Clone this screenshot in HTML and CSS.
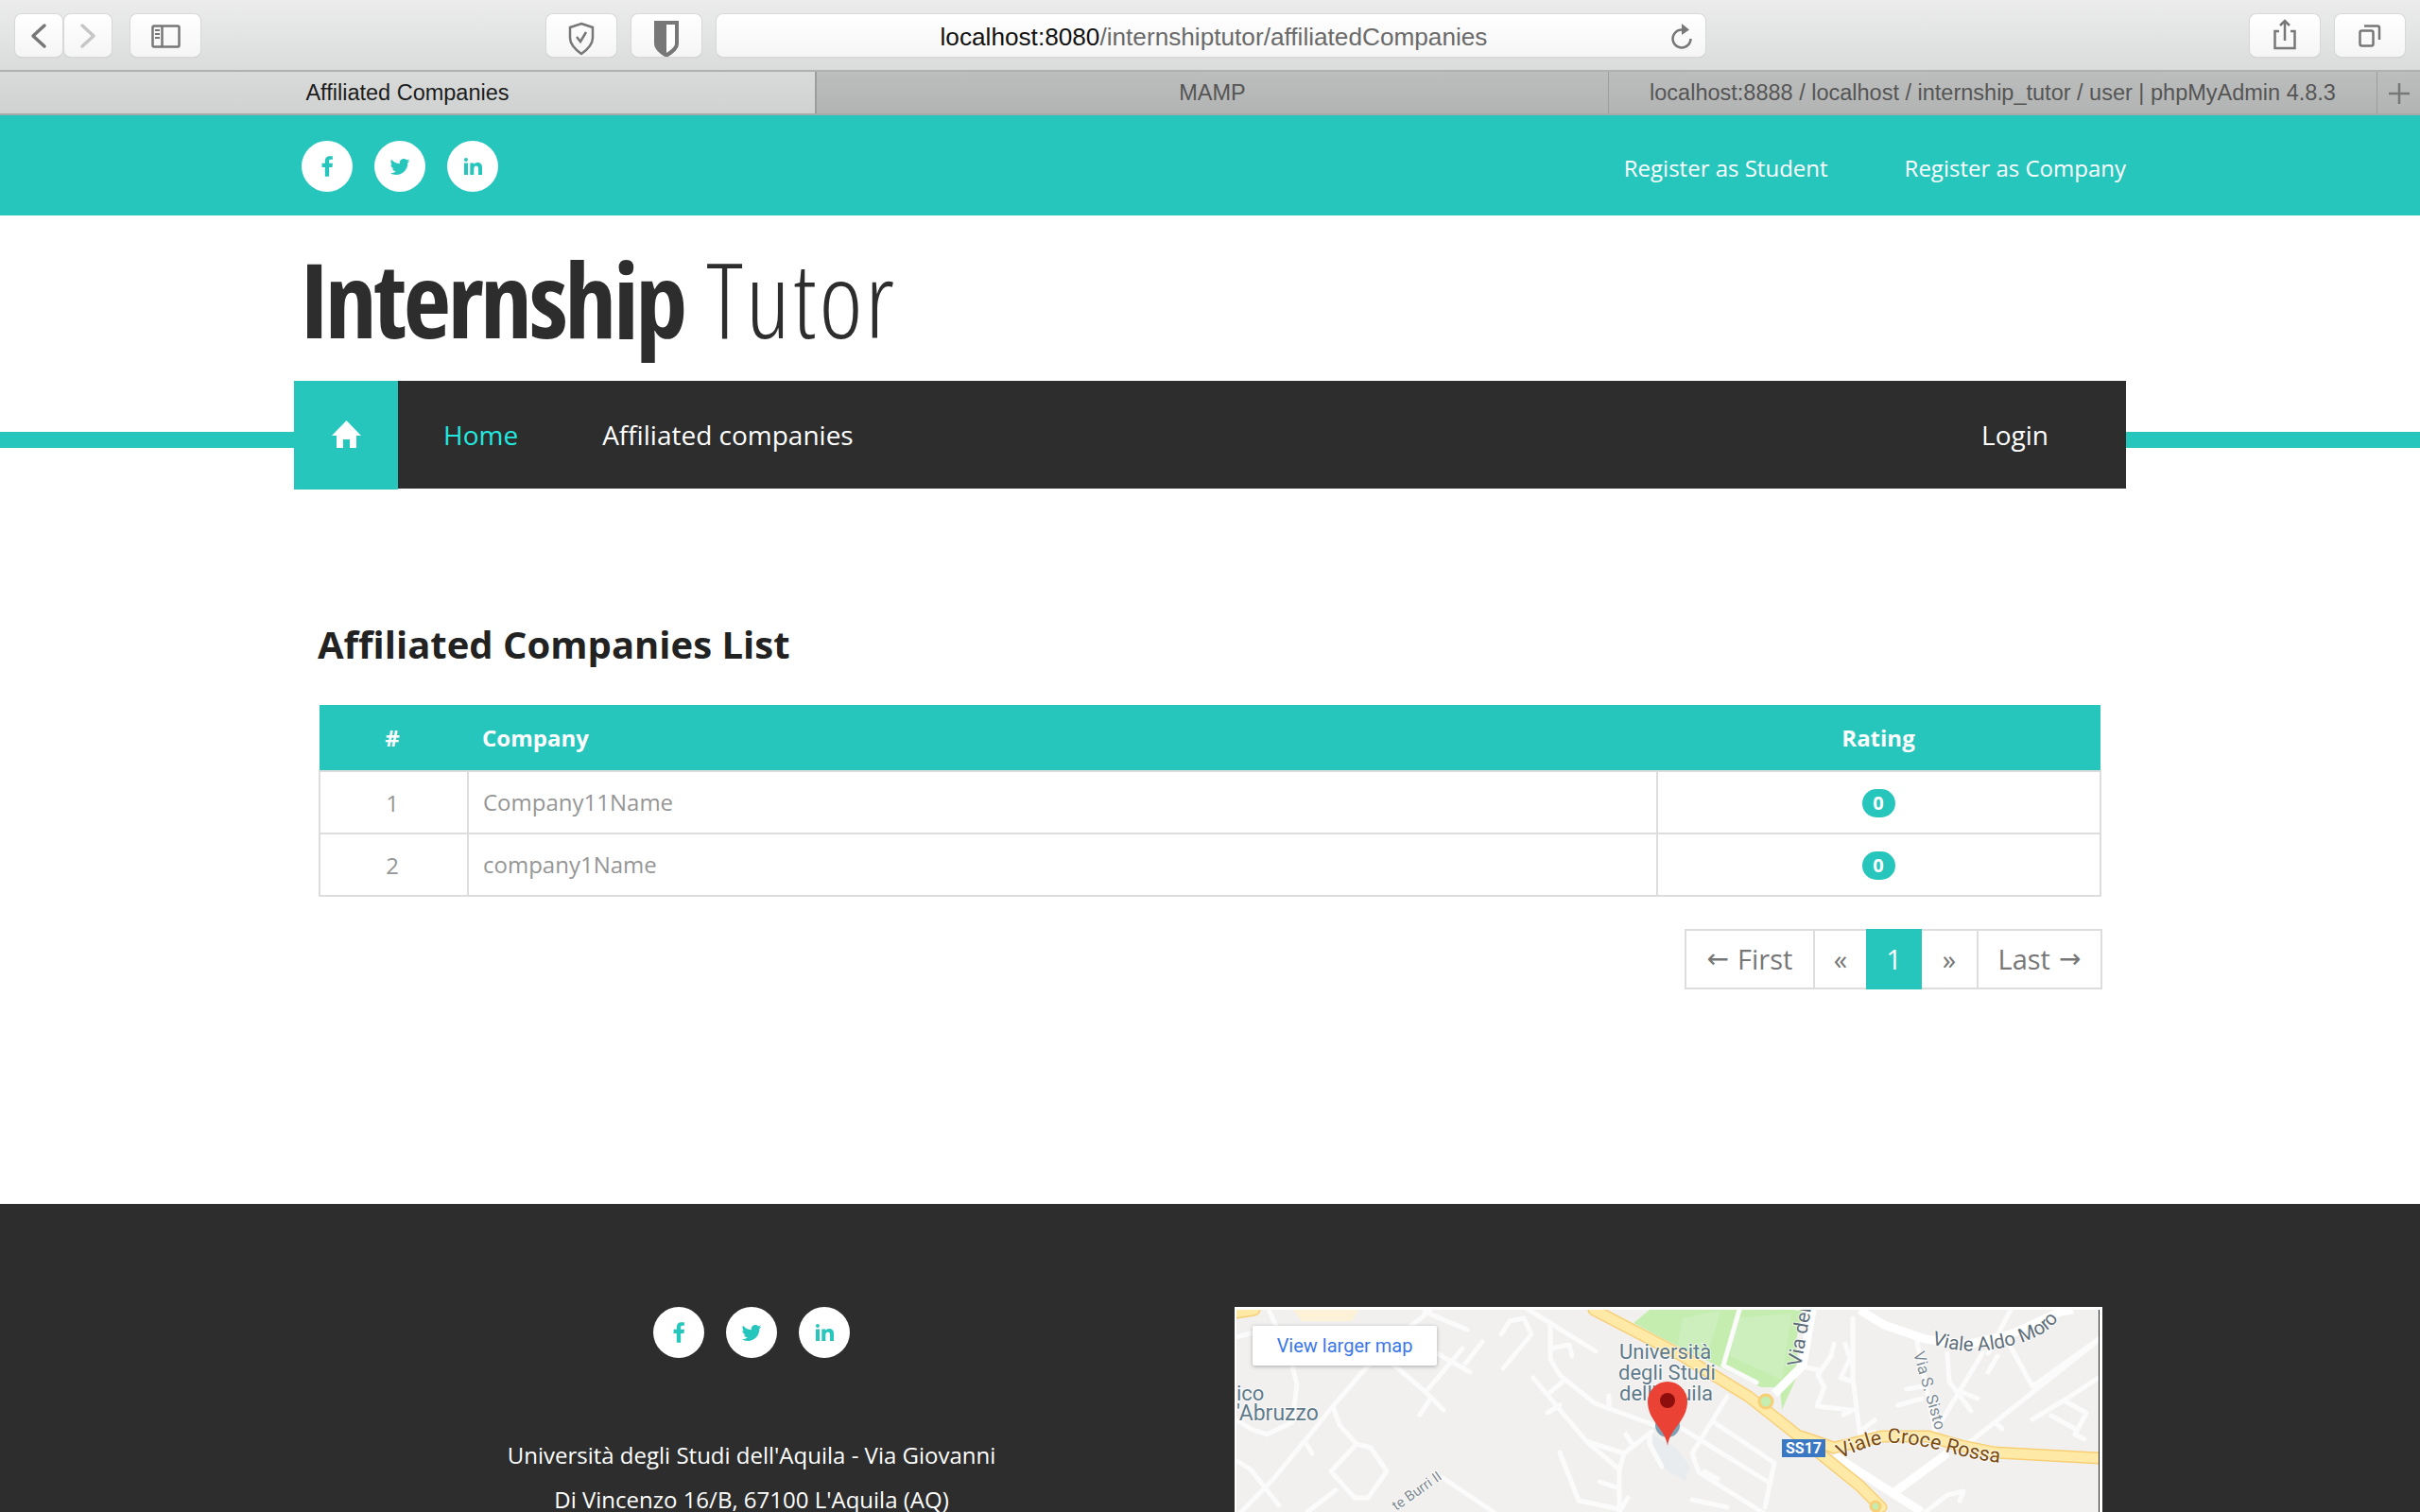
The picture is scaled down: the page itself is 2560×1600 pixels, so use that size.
FILE: index.html
```html
<!DOCTYPE html>
<html lang="en">
<head>
<meta charset="utf-8">
<title>Affiliated Companies</title>
<link rel="stylesheet" href="styles.css">
</head>
<body>
<svg class="sprite" aria-hidden="true">
  <symbol id="i-fb" viewBox="0 0 24 24"><path d="M17.525 9H14V7c0-1.032.084-1.682 1.563-1.682h1.868v-3.18C16.522 2.044 15.608 2 14.693 2 11.98 2 10 3.657 10 6.699V9H7v4l3-.001V22h4v-9.003l3.066-.001L17.525 9z"/></symbol>
  <symbol id="i-tw" viewBox="0 0 24 24"><path d="M22.46 6c-.77.35-1.6.58-2.46.69.88-.53 1.56-1.37 1.88-2.38-.83.5-1.75.85-2.72 1.05C18.37 4.5 17.26 4 16 4c-2.35 0-4.27 1.92-4.27 4.29 0 .34.04.67.11.98C8.28 9.09 5.11 7.38 3 4.79c-.37.63-.58 1.37-.58 2.15 0 1.49.75 2.81 1.91 3.56-.71 0-1.37-.2-1.95-.5v.03c0 2.08 1.48 3.82 3.44 4.21a4.22 4.22 0 0 1-1.93.07 4.28 4.28 0 0 0 4 2.98 8.521 8.521 0 0 1-5.33 1.84c-.34 0-.68-.02-1.02-.06C3.44 20.29 5.7 21 8.12 21 16 21 20.33 14.46 20.33 8.79c0-.19 0-.37-.01-.56.84-.6 1.56-1.36 2.14-2.23z"/></symbol>
  <symbol id="i-in" viewBox="0 0 24 24"><path d="M6.94 5a2 2 0 1 1-4-.002 2 2 0 0 1 4 .002zM7 8.48H3V21h4V8.48zm6.32 0H9.34V21h3.94v-6.57c0-3.66 4.77-4 4.77 0V21H22v-7.93c0-6.17-7.06-5.94-8.72-3.07l.04-1.52z"/></symbol>
</svg>

<header class="toolbar">
  <div class="tb-btn tb-nav"><svg class="tb-ico" viewBox="0 0 50 45"><path class="ln" d="M31 12 19 23l12 11"/></svg></div>
  <div class="tb-btn tb-nav"><svg class="tb-ico" viewBox="0 0 50 45"><path class="ln ln-off" d="M19 12l12 11-12 11"/></svg></div>
  <div class="tb-btn tb-wide tb-side"><svg class="tb-ico" viewBox="0 0 74 45"><rect class="thin" x="23.5" y="12.5" width="28" height="22" rx="1.5"/><path class="thin" d="M33.500 12v23"/><path class="thin dots" d="M26 17h5M26 21h5M26 25h5"/></svg></div>
  <div class="tb-btn tb-wide tb-shield"><svg class="tb-ico" viewBox="0 0 74 45"><path class="thin" d="M37 10l12 4v11c0 7-5 12-12 17-7-5-12-10-12-17V14z"/><path class="thin" d="M32 24l4 5 6-10"/></svg></div>
  <div class="tb-btn tb-wide"><svg class="tb-ico" viewBox="0 0 74 45"><path class="solid" d="M24 7h26v24c0 6-6 11-13 15-7-4-13-9-13-15z"/><path class="cut" d="M37 11h9v20c0 3-4 7-9 10z"/></svg></div>
  <div class="tb-url">
    <span class="url-text"><span class="url-host">localhost:8080</span>/internshiptutor/affiliatedCompanies</span>
    <svg class="url-reload" viewBox="0 0 24 28"><path class="thin" d="M12 7.500A9.500 9.500 0 1 0 21.500 17"/><path class="solid" d="M12 1l8 6.500-8 5.500z"/></svg>
  </div>
  <div class="tb-btn tb-wide tb-share"><svg class="tb-ico" viewBox="0 0 74 45"><path class="thin" d="M31 18h-4.500v18h21V18H43M37 28V8M32 12l5-5 5 5"/></svg></div>
  <div class="tb-btn tb-wide"><svg class="tb-ico" viewBox="0 0 74 45"><rect class="thin" x="26.500" y="17.500" width="14" height="16" rx="2"/><path class="thin" d="M31 12.500h14a2 2 0 0 1 2 2V27"/></svg></div>
</header>

<nav class="tabs">
  <div class="tab tab-active">Affiliated Companies</div>
  <div class="tab tab-mamp">MAMP</div>
  <div class="tab tab-pma">localhost:8888 / localhost / internship_tutor / user | phpMyAdmin 4.8.3</div>
  <div class="tab tab-plus"><svg class="plus" viewBox="0 0 22 22"><path class="thin" d="M11 0v22M0 11h22"/></svg></div>
</nav>

<div class="topbar">
  <div class="container topbar-row">
    <div class="socials">
      <a class="social"><svg class="s-ic s-fb"><use href="#i-fb"/></svg></a>
      <a class="social"><svg class="s-ic"><use href="#i-tw"/></svg></a>
      <a class="social"><svg class="s-ic"><use href="#i-in"/></svg></a>
    </div>
    <div class="reg-links">
      <a class="reg">Register as Student</a>
      <a class="reg">Register as Company</a>
    </div>
  </div>
</div>

<div class="container brand-row">
  <h1 class="brand"><b class="brand-b">Internship</b> <span class="brand-l">Tutor</span></h1>
</div>

<div class="nav-strip">
  <div class="container mainnav">
    <a class="nav-home"><svg class="home-ic" viewBox="0 0 31 29"><path d="M15.500 0 31 16h-5v13h-7v-9h-7v9H5V16H0z"/></svg></a>
    <a class="nav-link nav-current">Home</a>
    <a class="nav-link">Affiliated companies</a>
    <a class="nav-link nav-right">Login</a>
  </div>
</div>

<main class="container content">
  <h2 class="page-title">Affiliated Companies List</h2>
  <table class="grid">
    <thead>
      <tr><th class="c-num">#</th><th class="c-name">Company</th><th class="c-rate">Rating</th></tr>
    </thead>
    <tbody>
      <tr><td class="c-num">1</td><td class="c-name">Company11Name</td><td class="c-rate"><span class="badge">0</span></td></tr>
      <tr><td class="c-num">2</td><td class="c-name">company1Name</td><td class="c-rate"><span class="badge">0</span></td></tr>
    </tbody>
  </table>
  <div class="pager">
    <a class="pg pg-first"><span class="arrow">←</span><span class="pg-label">First</span></a>
    <a class="pg pg-prev">«</a>
    <a class="pg pg-on">1</a>
    <a class="pg pg-next">»</a>
    <a class="pg pg-last"><span class="pg-label">Last</span><span class="arrow">→</span></a>
  </div>
</main>

<footer class="footer">
  <div class="container footer-grid">
    <div class="foot-left">
      <div class="socials foot-socials">
        <a class="social"><svg class="s-ic s-fb"><use href="#i-fb"/></svg></a>
        <a class="social"><svg class="s-ic"><use href="#i-tw"/></svg></a>
        <a class="social"><svg class="s-ic"><use href="#i-in"/></svg></a>
      </div>
      <p class="addr">Università degli Studi dell'Aquila - Via Giovanni<br>Di Vincenzo 16/B, 67100 L'Aquila (AQ)</p>
    </div>
    <div class="map-frame">
      <div class="map">
        <svg class="map-svg" viewBox="1308 1386 912 300">
          <rect class="m-bg" x="1308" y="1386" width="912" height="300"/>
          <path class="m-tan" d="M1368 1386h69l-7 12h-53z"/>
          <path class="m-park" d="M1728 1400l17-14h162l-7 32 3 34-18 40-2-24h-20l-53-26-50-25z"/>
          <path class="m-park2" d="M1780 1395l40-8-15 50-30-15zM1835 1395l60-5-10 70-55-25z"/>
          <path class="m-bld" d="M1748 1518l25 14 15 20-5 15-30-17z"/>
          <g class="m-rd">
            <path d="M1313 1600l34-35 33-40 30-37 33-38 30-32 30-23 10-9"/>
            <path d="M1410 1488l7 20 18 20 15 4 17 25-20 28h-14l-25-28 27-29"/>
            <path d="M1307 1545l16 10 30 38M1380 1525l8 13M1307 1502l16 10 17 6 27-13 5-40-5-20"/>
            <path d="M1307 1415l20-5M1343 1388l7 15M1507 1388l45 19M1520 1432l35 20M1547 1427l-39 46 19 19M1568 1420l-18 23M1473 1443l35 30M1512 1482l-10 15"/>
            <path d="M1590 1448l30-36-8-17-15 3-9 14M1617 1386l23 14 48 30M1640 1400v38l10 17 37 30 63 23M1640 1427l20-4 3 12"/>
            <path d="M1622 1458l56 67 35 30v45M1653 1462l-13 11M1650 1487l-13 8M1678 1525l40 13 29-23M1718 1538l-5 17M1650 1537l20 51 43 9M1692 1568l21 7M1722 1585l-9 15"/>
            <path d="M1525 1563l55 37M1413 1577l-30 23M1702 1477v13M1720 1518l7 10M1745 1518v10l13 24"/>
            <path d="M1827 1478l-37 60 7 20 70 44M1813 1505l64 43-10 47M1780 1512l90 56M1803 1557l14 8M1790 1587l37 8"/>
            <path d="M1960 1395v63l7 57 16 -12M1967 1520l16-5M1940 1422l-3 13-14 20 7 13-8 20 35 4M1903 1445l22 5M1952 1422l5 16-10 20 13 4M1950 1497l10-5M2017 1470l17-3M2008 1487l25-7"/>
            <path d="M2027 1415l20 100M2097 1432l-50 83M2060 1432l2 30 23 31M2073 1472l19 8M2123 1418l27 49M2150 1467l70-50M2127 1386l-24 46M2113 1435l-10 17"/>
            <path d="M2150 1502l33-20 37-24M2183 1482l24 13-12 23 10 5M2170 1498l25 14M2110 1505l8 7M2037 1600l23-18 17-4-4 10M2085 1525l135-107"/>
            <path d="M1840 1386l-17 59 35 18"/>
          </g>
          <g class="m-rd-big">
            <path d="M1967 1386l26 16 44 15 43 6 47-11 53-24 13-2"/>
            <path d="M1917 1386l-10 59-30 30"/>
            <path d="M1940 1540l93 60M2000 1582l60-44"/>
          </g>
          <g class="m-hwy-o">
            <path d="M1686 1386l94 49 70 43 43 34 74 60 23 23M1905 1520l35 12 50-12h50l35 10 35 7 110 6"/>
            <path d="M1308 1389l19-3"/>
          </g>
          <g class="m-hwy-i">
            <path d="M1686 1386l94 49 70 43 43 34 74 60 23 23M1905 1520l35 12 50-12h50l35 10 35 7 110 6"/>
            <path d="M1308 1389l19-3"/>
          </g>
          <circle class="m-ring" cx="1868" cy="1483" r="7"/>
          <circle class="m-ring" cx="1984" cy="1594" r="5"/>
          <text class="m-lbl m-place" x="1713" y="1438">Università</text>
          <text class="m-lbl m-place" x="1712" y="1460">degli Studi</text>
          <text class="m-lbl m-place" x="1713" y="1482">dell'Aquila</text>
          <text class="m-lbl m-place" x="1308" y="1482">ico</text>
          <text class="m-lbl m-place m-abr" x="1308" y="1503">'Abruzzo</text>
          <text class="m-lbl m-via" transform="translate(1905 1447) rotate(-80)">Via del</text>
          <text class="m-lbl m-small" transform="translate(2024 1432) rotate(74)">Via S. Sisto</text>
          <text class="m-lbl m-tiny" transform="translate(1477 1599) rotate(-35)">te Burri II</text>
          <path id="aldo" class="m-none" d="M2043 1422q40 14 84 2t50-30l30-20"/>
          <text class="m-lbl m-via m-aldo"><textPath href="#aldo">Viale Aldo Moro</textPath></text>
          <path id="croce" class="m-none" d="M1947 1544q30-16 54-17 24 0 60 10t60 11l60 5"/>
          <text class="m-lbl m-brown"><textPath href="#croce">Viale Croce Rossa</textPath></text>
          <rect class="m-shield" x="1885" y="1523" width="46" height="19"/>
          <text class="m-shield-t" x="1908" y="1538">SS17</text>
          <circle class="m-pin-b" cx="1764" cy="1508" r="13"/>
          <path class="m-pin" d="M1764 1530c-2-18-21-26-21-47a21 21 0 0 1 42 0c0 21-19 29-21 47z"/>
          <circle class="m-pin-d" cx="1764" cy="1482" r="8"/>
        </svg>
        <a class="map-link">View larger map</a>
      </div>
    </div>
  </div>
</footer>
</body>
</html>
```
FILE: styles.css
```css
html, body { margin: 0; padding: 0; height: 1600px; overflow: hidden; background: #fff; }
body { font-family: "Open Sans", sans-serif; color: #2d2d2d; }
a { color: inherit; text-decoration: none; }
.sprite { display: none; }

/* browser chrome */
.toolbar {
  height: 74px; box-sizing: border-box; padding: 15px 16px 0;
  display: flex; align-items: flex-start;
  background: linear-gradient(#ececec, #dadcdc);
  border-bottom: 0;
}
.tb-btn {
  height: 45px; width: 50px; box-sizing: border-box; flex: none;
  background: linear-gradient(#fff, #f5f5f5); border-radius: 7px;
  box-shadow: 0 0 0 1px #d8d8d8, 0 1px 1px #b5b5b5;
}
.tb-nav + .tb-nav { margin-left: 2px; }
.tb-wide { width: 74px; }
.tb-side { margin-left: 20px; margin-right: 366px; }
.tb-shield { margin-right: 16px; }
.tb-ico { display: block; width: 100%; height: 100%; }
.ln { fill: none; stroke: #777; stroke-width: 3.5; stroke-linecap: round; stroke-linejoin: round; }
.ln-off { stroke: #c6c6c6; }
.thin { fill: none; stroke: #777; stroke-width: 2.500; }
.dots { stroke-width: 2; }
.solid { fill: #777; }
.cut { fill: #fff; }
.tb-url {
  width: 1046px; height: 45px; margin-left: 16px; margin-right: 576px; flex: none; position: relative;
  display: flex; align-items: center; justify-content: center;
  background: linear-gradient(#fff, #f5f5f5); border-radius: 7px;
  box-shadow: 0 0 0 1px #d8d8d8, 0 1px 1px #b5b5b5;
  font-family: "Liberation Sans", sans-serif; font-size: 26.2px; color: #6a6a6a;
}
.url-text { position: relative; top: 2px; left: 3px; }
.url-host { color: #111; }
.url-reload { position: absolute; right: 13px; top: 9px; width: 24px; height: 28px; }
.tb-share { margin-right: 16px; margin-left: 0; }
.tabs {
  height: 48px; box-sizing: border-box; display: flex;
  border-top: 2px solid #b0b0b0; border-bottom: 2px solid #a8a8a8;
  font-family: "Liberation Sans", sans-serif; font-size: 23.500px; color: #555;
}
.tab {
  display: flex; align-items: center; justify-content: center; box-sizing: border-box; padding-top: 1px;
  background: linear-gradient(#bcbdbd, #b2b4b4); border-left: 1px solid #9d9d9d;
}
.tab-active { width: 862px; color: #1c1c1c; background: linear-gradient(#d9dada, #d0d2d2); border-left: 0; }
.tab-mamp { width: 839px; border-left: 2px solid #9d9d9d; }
.tab-pma { width: 813px; }
.tab-plus { flex: 1; }
.plus { width: 22px; height: 22px; }

/* site header */
.container { width: 1938px; margin: 0 auto; box-sizing: border-box; }
.topbar { height: 106px; background: #27c6bd; }
.topbar-row { height: 100%; display: flex; align-items: center; justify-content: space-between; padding-left: 8px; }
.socials { display: flex; gap: 23px; position: relative; top: 1px; }
.social { width: 54px; height: 54px; border-radius: 50%; background: #fff; display: flex; align-items: center; justify-content: center; }
.s-ic { width: 24px; height: 24px; fill: #27c6bd; }
.s-fb { width: 26px; height: 26px; }
.reg-links { display: flex; gap: 81px; position: relative; top: 2px; }
.reg { color: #fff; font-size: 24px; }

.brand-row { height: 175px; display: flex; align-items: flex-start; padding-left: 7px; }
.brand { margin: 0; font-size: 110px; font-weight: 400; line-height: 174px; white-space: nowrap; font-stretch: 75%; color: #2d2d2d; word-spacing: 3px; }
.brand-b { font-weight: 700; letter-spacing: -3.500px; }
.brand-l { font-weight: 300; letter-spacing: 2.800px; }

.nav-strip { height: 114px; background: linear-gradient(#fff 54px, #27c6bd 54px, #27c6bd 71px, #fff 71px); }
.mainnav { height: 114px; display: flex; align-items: center; background: #2d2d2d; color: #fff; font-size: 28px; }
.nav-home { width: 110px; height: 115px; background: #27c6bd; display: flex; align-items: center; justify-content: center; flex: none; align-self: flex-start; }
.home-ic { width: 31px; height: 29px; fill: #fff; position: relative; top: -1px; }
.nav-link { margin-left: 48px; margin-right: 41px; }
.nav-current { color: #22e8e0; }
.nav-right { margin-left: auto; margin-right: 82px; }

/* content */
.content { padding: 0 26px; height: 757px; }
.page-title { margin: 0 0 0 -1px; padding-top: 137px; font-size: 40px; font-weight: 700; line-height: 55px; color: #222; }
.grid { border-collapse: collapse; table-layout: fixed; width: 1886px; margin-top: 37px; font-size: 24px; }
.grid th { background: #27c6bd; color: #fff; height: 70px; padding: 0 16px 0 15px; font-weight: 700; }
.grid td { border: 2px solid #ddd; height: 66px; padding: 0 16px 2px 15px; color: #969696; }
.grid th, .grid td { box-sizing: border-box; }
.c-num { width: 157px; text-align: center; }
.grid .c-num { padding: 0 17px 0 14px; }
.c-name { text-align: left; }
.c-rate { width: 469px; text-align: center; }
.badge { display: inline-block; width: 35px; height: 30px; line-height: 30px; border-radius: 15px; background: #27c6bd; color: #fff; font-size: 20px; font-weight: 700; vertical-align: middle; }
.pager { display: flex; justify-content: flex-end; margin: 34px -1px 0 0; font-size: 29px; color: #777; }
.pg { height: 64px; box-sizing: border-box; border: 2px solid #ddd; padding-bottom: 2px; display: flex; align-items: center; justify-content: center; margin-left: -2px; }
.arrow { font-family: "DejaVu Sans", sans-serif; font-size: 28px; }
.pg-first { width: 138px; gap: 9px; }
.pg-prev { width: 58px; }
.pg-on { width: 59px; background: #27c6bd; border-color: #27c6bd; color: #fff; position: relative; z-index: 1; }
.pg-next { width: 62px; }
.pg-last { width: 133px; gap: 9px; }

/* footer */
.footer { background: #2d2d2d; height: 326px; overflow: hidden; }
.footer-grid { display: flex; padding: 109px 25px 0 26px; }
.foot-left { width: 916px; margin-right: 53px; flex: none; display: flex; flex-direction: column; align-items: center; }
.foot-socials { top: 0; }
.addr { margin: 79px 0 0; color: #fff; font-size: 24px; line-height: 47px; text-align: center; }
.map-frame { width: 918px; height: 300px; flex: none; background: #fff; padding: 3px 3px 0 2px; box-sizing: border-box; }
.map { position: relative; height: 100%; border-right: 1px solid #222; }
.map-svg { display: block; width: 912px; height: 300px; }
.map-link { position: absolute; left: 17px; top: 17px; width: 195px; height: 42px; background: #fff; border-radius: 2px; box-shadow: 0 1px 4px rgba(0,0,0,.3); font-family: Roboto, sans-serif; font-size: 20px; color: #3b78e7; display: flex; align-items: center; justify-content: center; }

/* map drawing */
.m-bg { fill: #f1f0ef; }
.m-tan { fill: #fdf1d8; }
.m-park { fill: #c5edb0; }
.m-park2 { fill: #cdefbd; }
.m-bld { fill: #e8ecef; }
.m-rd path, .m-rd-big path, .m-hwy-o path, .m-hwy-i path { fill: none; stroke-linecap: round; stroke-linejoin: round; }
.m-rd path { stroke: #fbfbfb; stroke-width: 5; }
.m-rd-big path { stroke: #fff; stroke-width: 9; stroke-linecap: butt; }
.m-hwy-o path { stroke: #f8cf74; stroke-width: 13; }
.m-hwy-i path { stroke: #fee9a6; stroke-width: 10; }
.m-ring { fill: #c5edb0; stroke: #f8cf74; stroke-width: 3; }
.m-none { fill: none; }
.m-lbl { font-family: Roboto, sans-serif; paint-order: stroke; stroke: #fff; stroke-width: 2px; stroke-opacity: .7; }
.m-place { font-size: 22px; fill: #5f7a8a; }
.m-abr { font-size: 23px; }
.m-via { font-size: 21px; fill: #5f6f7a; }
.m-aldo { font-size: 20.500px; }
.m-small { font-size: 17px; fill: #7e8c96; }
.m-tiny { font-size: 15px; fill: #7f8a90; }
.m-brown { font-size: 21.500px; fill: #7a4a10; }
.m-shield { fill: #3b78c4; }
.m-shield-t { font-family: Roboto, sans-serif; font-size: 16px; font-weight: 700; fill: #fff; text-anchor: middle; }
.m-pin-b { fill: #7fa1b3; }
.m-pin { fill: #ea4335; }
.m-pin-d { fill: #8e0e0e; }
```
